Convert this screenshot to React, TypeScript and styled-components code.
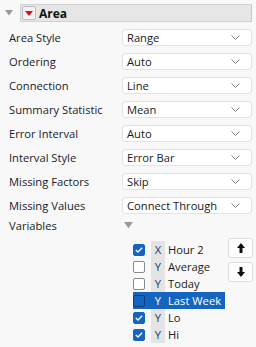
import React from "react";
import styled, { createGlobalStyle } from "styled-components";

const Global = createGlobalStyle`
  html, body { margin: 0; padding: 0; background: #f8f8f8; }
  body { font-family: "Segoe UI", "Open Sans", "Noto Sans", sans-serif; font-size: 11.2px; color: #1a1a1a; }
`;

const Page = styled.div`
  width: 256px;
  height: 347px;
  background: #f8f8f8;
  padding-top: 4px;
  box-sizing: border-box;
`;

const TitleRow = styled.div`
  display: flex;
  align-items: center;
  padding-left: 5px;
  gap: 7px;
  width: 252px;
  box-sizing: border-box;
`;

const Header = styled.div`
  flex: 1;
  height: 18px;
  display: flex;
  align-items: center;
  gap: 3px;
  background: #e6e6e6;
  border: 1px solid #d2d2d2;
  border-right-color: #c8c8c8;
  box-sizing: border-box;
  padding-left: 1px;
`;

const RedButton = styled.div`
  width: 14px;
  height: 14px;
  box-sizing: border-box;
  border: 1px solid #bdbdbd;
  border-radius: 2px;
  background: #f2f2f2;
  display: flex;
  align-items: center;
  justify-content: center;
`;

const Title = styled.span`
  font-weight: 700;
  font-size: 12px;
  color: #111;
`;

const Form = styled.div`
  display: grid;
  grid-template-columns: 113px 130px;
  row-gap: 7px;
  padding-left: 9px;
  margin-top: 7px;
  align-items: center;
`;

const Label = styled.div`
  height: 17px;
  line-height: 17px;
  color: #1a1a2a;
  white-space: nowrap;
`;

const Select = styled.div`
  height: 17px;
  box-sizing: border-box;
  background: #fff;
  border: 1px solid #e4e4e4;
  border-radius: 3px;
  display: flex;
  align-items: center;
  justify-content: space-between;
  padding: 0 11px 0 4px;
  color: #1a1a1a;
  white-space: nowrap;
`;

const VarRow = styled.div`
  display: grid;
  grid-template-columns: 113px 130px;
  padding-left: 9px;
  margin-top: 3px;
`;

const VarLabel = styled.div`
  line-height: 17px;
  height: 17px;
`;

const VarRight = styled.div`
  display: flex;
  flex-direction: column;
`;

const TriWrap = styled.div`
  height: 17px;
  padding-left: 2px;
  display: flex;
  align-items: center;
`;

const ListArea = styled.div`
  display: flex;
  margin-top: 7px;
  padding-left: 133px;
`;

const List = styled.div`
  display: flex;
  flex-direction: column;
  width: 92px;
`;

const Item = styled.div<{ $sel?: boolean }>`
  height: 17px;
  display: flex;
  align-items: center;
  background: ${(p) => (p.$sel ? "#1565c0" : "transparent")};
  color: ${(p) => (p.$sel ? "#fff" : "#1a1a1a")};
`;

const Check = styled.div<{ $on?: boolean; $sel?: boolean }>`
  width: 12px;
  height: 12px;
  box-sizing: border-box;
  border-radius: 2px;
  margin-right: 6px;
  border: 1px solid ${(p) => (p.$on ? "#1565c0" : p.$sel ? "#0d3d7a" : "#8a8a8a")};
  background: ${(p) => (p.$on ? "#1565c0" : p.$sel ? "#1565c0" : "#fff")};
  display: flex;
  align-items: center;
  justify-content: center;
`;

const Role = styled.div<{ $sel?: boolean }>`
  width: 14px;
  height: 17px;
  line-height: 17px;
  text-align: center;
  background: ${(p) => (p.$sel ? "transparent" : "#e4e4e4")};
  color: ${(p) => (p.$sel ? "#fff" : "#1a3a6a")};
  margin-right: 3px;
`;

const Name = styled.span`
  white-space: nowrap;
`;

const Buttons = styled.div`
  display: flex;
  flex-direction: column;
  gap: 4px;
  margin-left: 3px;
  margin-top: -3px;
`;

const MoveButton = styled.div`
  width: 25px;
  height: 20px;
  box-sizing: border-box;
  background: #fff;
  border: 1px solid #dcdcdc;
  border-radius: 3px;
  display: flex;
  align-items: center;
  justify-content: center;
`;

const Chevron = () => (
  <svg width="9" height="5" viewBox="0 0 9 5">
    <path d="M0.5 0.5 L4.5 4.5 L8.5 0.5" fill="none" stroke="#7a7a7a" strokeWidth="1" />
  </svg>
);

const GrayTri = ({ size = 9 }: { size?: number }) => (
  <svg width={size} height={size * 0.7} viewBox="0 0 10 7">
    <path d="M0 0 L10 0 L5 7 Z" fill="#9a9a9a" />
  </svg>
);

const Tick = () => (
  <svg width="8" height="6" viewBox="0 0 8 6">
    <path d="M0.8 3 L3 5 L7.2 0.8" fill="none" stroke="#fff" strokeWidth="1.3" />
  </svg>
);

const Arrow = ({ down }: { down?: boolean }) => (
  <svg width="8" height="10" viewBox="0 0 8 10" style={{ transform: down ? "rotate(180deg)" : undefined }}>
    <path d="M4 0 L8 5 L5.5 5 L5.5 10 L2.5 10 L2.5 5 L0 5 Z" fill="#111" />
  </svg>
);

const options: [string, string][] = [
  ["Area Style", "Range"],
  ["Ordering", "Auto"],
  ["Connection", "Line"],
  ["Summary Statistic", "Mean"],
  ["Error Interval", "Auto"],
  ["Interval Style", "Error Bar"],
  ["Missing Factors", "Skip"],
  ["Missing Values", "Connect Through"],
];

const vars = [
  { on: true, role: "X", name: "Hour 2" },
  { on: false, role: "Y", name: "Average" },
  { on: false, role: "Y", name: "Today" },
  { on: false, role: "Y", name: "Last Week", sel: true },
  { on: true, role: "Y", name: "Lo" },
  { on: true, role: "Y", name: "Hi" },
];

export default function App() {
  return (
    <Page>
      <Global />
      <TitleRow>
        <GrayTri size={8} />
        <Header>
          <RedButton>
            <svg width="8" height="5" viewBox="0 0 8 5">
              <path d="M0 0 L8 0 L4 5 Z" fill="#d0121b" />
            </svg>
          </RedButton>
          <Title>Area</Title>
        </Header>
      </TitleRow>
      <Form>
        {options.map(([l, v]) => (
          <React.Fragment key={l}>
            <Label>{l}</Label>
            <Select>
              <span>{v}</span>
              <Chevron />
            </Select>
          </React.Fragment>
        ))}
      </Form>
      <VarRow>
        <VarLabel>Variables</VarLabel>
        <VarRight>
          <TriWrap>
            <GrayTri size={9} />
          </TriWrap>
        </VarRight>
      </VarRow>
      <ListArea>
        <List>
          {vars.map((v) => (
            <Item key={v.name} $sel={v.sel}>
              <Check $on={v.on} $sel={v.sel}>{v.on && <Tick />}</Check>
              <Role $sel={v.sel}>{v.role}</Role>
              <Name>{v.name}</Name>
            </Item>
          ))}
        </List>
        <Buttons>
          <MoveButton><Arrow /></MoveButton>
          <MoveButton><Arrow down /></MoveButton>
        </Buttons>
      </ListArea>
    </Page>
  );
}
